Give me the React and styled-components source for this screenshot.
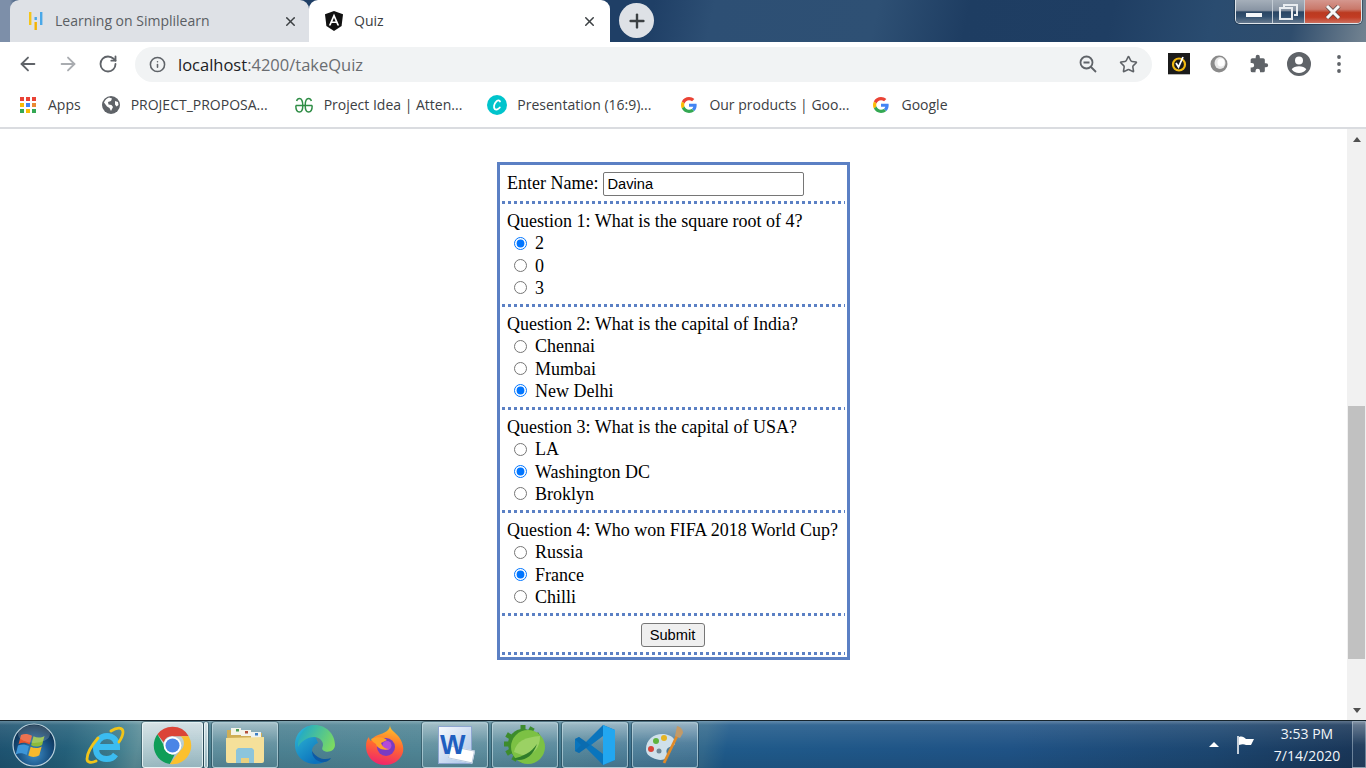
import React from 'react';
import styled, { createGlobalStyle } from 'styled-components';
import { ArrowLeft, ArrowRight, RotateCw, Info, Star, X, Plus } from 'lucide-react';

const Global = createGlobalStyle`
  html, body { margin: 0; padding: 0; height: 100%; overflow: hidden; background: #fff; }
  * { box-sizing: border-box; }
`;

const Screen = styled.div`
  width: 1366px;
  height: 768px;
  display: flex;
  flex-direction: column;
  overflow: hidden;
`;

/* ---- browser frame ---- */
const TitleBar = styled.div`
  height: 42px;
  flex: none;
  display: flex;
  align-items: flex-start;
  padding-left: 10px;
  background:
    linear-gradient(90deg, #7d8fa9 0, #7d8fa9 10px, rgba(125,143,169,0) 20px),
    linear-gradient(102deg, #1f3f66 0, #1f3f66 640px, #2d4f74 700px, #2e5074 860px, #1e3d62 950px, #1f3e63 1090px, #2a4c70 1190px, #2f4d6d 1270px, #6f808f 1340px, #7a8a98 1366px);
`;

const Tab = styled.div`
  width: ${p => (p.$active ? '301px' : '299px')};
  height: 42px;
  flex: none;
  display: flex;
  align-items: center;
  padding: 0 ${p => (p.$active ? '13px' : '11px')} 0 ${p => (p.$active ? '15px' : '16px')};
  border-radius: 9px 9px 0 0;
  background: ${p => (p.$active ? '#fff' : '#dee1e6')};
  font: 14px "Open Sans", sans-serif;
  color: ${p => (p.$active ? '#3c4043' : '#5a5e63')};
`;

const TabIcon = styled.svg`
  width: 20px;
  height: 20px;
  flex: none;
  margin-right: ${p => p.$gap}px;
`;

const TabLabel = styled.span`
  flex: 1;
  margin-top: -2px;
  white-space: nowrap;
`;

const NewTab = styled.div`
  width: 35px;
  height: 35px;
  margin: 3px 0 0 9px;
  flex: none;
  border-radius: 50%;
  background: #dee1e6;
  color: #3c4043;
  display: flex;
  align-items: center;
  justify-content: center;
`;

const WindowButtons = styled.div`
  margin: 0 4px 0 auto;
  width: 127px;
  height: 24px;
  display: flex;
  border: 1px solid #dfe5ea;
  border-top: 0;
  border-radius: 0 0 5px 5px;
  box-shadow: 0 0 0 1px rgba(20,40,60,.5);
  overflow: hidden;
`;

const WinBtn = styled.div`
  width: ${p => p.$w}px;
  flex: none;
  display: flex;
  align-items: center;
  justify-content: center;
  border-left: ${p => (p.$first ? '0' : '1px solid #c3ccd5')};
  background: ${p => (p.$close
    ? 'linear-gradient(#d5978e 0, #c9786a 40%, #bb3a20 55%, #c23c24 75%, #cc6f5e 100%)'
    : 'linear-gradient(#a5afba 0, #8894a3 45%, #2a4563 52%, #32506f 72%, #66798e 100%)')};
`;

const Toolbar = styled.div`
  height: 44px;
  flex: none;
  display: flex;
  align-items: center;
  background: #fff;
  padding: 0 14px 0 16px;
`;

const NavIcon = styled.div`
  width: 24px;
  height: 24px;
  margin-right: ${p => p.$gap || 0}px;
  flex: none;
  display: flex;
  align-items: center;
  justify-content: center;
  color: ${p => p.$color || '#5f6368'};
`;

const Omnibox = styled.div`
  width: 1017px;
  height: 35px;
  margin: 0 15px 0 15px;
  flex: none;
  display: flex;
  align-items: center;
  padding: 0 12px 0 14px;
  border-radius: 18px;
  background: #f1f3f4;
  color: #5f6368;
`;

const Url = styled.div`
  flex: 1;
  margin-left: 12px;
  font: 16.5px "Open Sans", sans-serif;
  color: #6a6d71;
  b { font-weight: 400; color: #202124; }
`;

const Bookmarks = styled.div`
  height: 43px;
  flex: none;
  display: flex;
  align-items: center;
  padding: 0 0 3px 18px;
  background: #fff;
  border-bottom: 2px solid #dadce0;
`;

const Bookmark = styled.div`
  display: flex;
  align-items: center;
  margin-right: ${p => p.$gap}px;
  font: 14px "Open Sans", sans-serif;
  color: #3c4043;
  white-space: nowrap;
`;

const BookmarkLabel = styled.span`
  margin-top: -2px;
`;

const BookmarkIcon = styled.svg`
  width: 20px;
  height: 20px;
  flex: none;
  margin-right: 10px;
`;

/* ---- page ---- */
const Viewport = styled.div`
  flex: 1;
  display: flex;
  min-height: 0;
`;

const Page = styled.main`
  flex: 1;
  display: flex;
  justify-content: center;
  align-items: flex-start;
  padding-top: 33px;
  background: #fff;
`;

const Scrollbar = styled.div`
  width: 19px;
  flex: none;
  display: flex;
  flex-direction: column;
  align-items: center;
  background: #f1f1f1;
`;

const ArrowBtn = styled.div`
  height: 20px;
  flex: none;
  display: flex;
  align-items: center;
  justify-content: center;
  &::after {
    content: '';
    border-left: 4.5px solid transparent;
    border-right: 4.5px solid transparent;
    ${p => (p.$down ? 'border-top: 5px solid #505050;' : 'border-bottom: 5px solid #505050;')}
  }
`;

const ScrollSpacer = styled.div`
  height: ${p => p.$h}px;
  flex: none;
`;

const Thumb = styled.div`
  width: 17px;
  height: 253px;
  flex: none;
  background: #c1c1c1;
`;

const QuizForm = styled.form`
  width: 353px;
  height: 498px;
  padding: 2px;
  border: 3px solid #5b80c4;
  font: 18px "Liberation Serif", "Times New Roman", serif;
  color: #000;
  display: flex;
  flex-direction: column;
`;

/* square dots, 3px on 3px off, the way the reference draws its dotted rule */
const Section = styled.div`
  height: ${p => p.$h}px;
  flex: none;
  padding: ${p => p.$top}px 5px 3px;
  line-height: 22.25px;
  background: repeating-linear-gradient(90deg, #5b80c4 0 3px, transparent 3px 6px) left bottom / 100% 3px no-repeat;
`;

const NameRow = styled(Section)`
  display: flex;
  align-items: flex-start;
  line-height: 23px;
`;

const NameInput = styled.input`
  width: 201px;
  height: 24px;
  margin: 0 0 0 5px;
  padding: 1px 3px;
  border: 1px solid #767676;
  border-radius: 2px;
  font: 14.67px "Liberation Sans", Arial, sans-serif;
  color: #000;
`;

const Question = styled.div`
  white-space: nowrap;
`;

const Option = styled.label`
  display: flex;
  align-items: center;
  height: 22.25px;
  padding-left: 6.5px;
`;

const Radio = styled.input`
  width: 13px;
  height: 13px;
  margin: 0 8.5px 0 0;
  flex: none;
`;

const SubmitRow = styled(Section)`
  display: flex;
  justify-content: center;
  align-items: flex-start;
  padding-right: 7px;
`;

const SubmitBtn = styled.button`
  width: 64px;
  height: 24px;
  padding: 0;
  border: 1px solid #767676;
  border-radius: 3px;
  background: #efefef;
  font: 14.67px "Liberation Sans", Arial, sans-serif;
  color: #000;
`;

/* ---- windows taskbar ---- */
const Taskbar = styled.div`
  height: 48px;
  flex: none;
  display: flex;
  align-items: stretch;
  border-top: 1px solid #16242c;
  background:
    linear-gradient(180deg, rgba(255,255,255,.3) 0, rgba(255,255,255,.1) 4px, rgba(0,0,0,0) 60%, rgba(0,0,0,.08) 100%),
    linear-gradient(100deg, #1d5270 0, #24607a 70px, #3f7d8e 120px, #5b8d98 140px, #4a7f90 180px, #4f8494 420px, #437a90 560px, #32688c 698px, #1f5a8a 720px, #1f5285 1000px, #1c4670 1200px, #193658 1340px, #1d3a58 1366px);
`;

const Orb = styled.div`
  width: 72px;
  flex: none;
  display: flex;
  align-items: center;
  padding-left: 12px;
`;

const Tile = styled.div`
  width: ${p => p.$w || 66}px;
  margin: 1px ${p => (p.$gap === undefined ? 4 : p.$gap)}px 0 0;
  flex: none;
  display: flex;
  align-items: center;
  justify-content: center;
  border-radius: 3px;
  ${p => p.$state === 'open' && `
    border: 1px solid rgba(205,228,235,.6);
    box-shadow: 0 0 0 1px rgba(15,35,45,.35);
    background: linear-gradient(rgba(255,255,255,.42), rgba(255,255,255,.14) 45%, rgba(255,255,255,.06));
  `}
  ${p => p.$state === 'active' && `
    border: 1px solid rgba(240,250,250,.8);
    box-shadow: 0 0 0 1px rgba(15,35,45,.35);
    background: linear-gradient(rgba(255,255,255,.72), rgba(215,232,235,.55));
  `}
`;

const Tray = styled.div`
  margin-left: auto;
  display: flex;
  align-items: center;
`;

const TrayArrow = styled.div`
  margin-right: 17px;
  border-left: 5px solid transparent;
  border-right: 5px solid transparent;
  border-bottom: 5px solid #fff;
`;

const Clock = styled.div`
  width: 90px;
  margin-left: 6px;
  text-align: center;
  font: 14px/22px "Open Sans", sans-serif;
  color: #f2f6fa;
`;

const ShowDesktop = styled.div`
  width: 14px;
  align-self: stretch;
  border: 1px solid rgba(220,235,245,.4);
  background: linear-gradient(rgba(255,255,255,.28), rgba(255,255,255,.04) 50%);
`;

const WordDoc = styled.div`
  position: relative;
  width: 34px;
  height: 38px;
  background: linear-gradient(135deg, #f6f9fd 0, #a9c4e8 100%);
  border: 1px solid #8ea6d0;
`;

const WordLetter = styled.span`
  position: absolute;
  left: 1px;
  top: 3px;
  font: bold 27px/30px "Liberation Sans", sans-serif;
  color: #1f5fc0;
`;

const WordSheet = styled.div`
  position: absolute;
  right: -3px;
  bottom: 2px;
  width: 25px;
  height: 13px;
  transform: rotate(12deg);
  background: #fff;
  border: 1px solid #b8c8dc;
`;

/* ---- logos ---- */
const GoogleG = () => (
  <BookmarkIcon viewBox="-6 -6 60 60">
    <path fill="#EA4335" d="M24 9.5c3.54 0 6.71 1.22 9.21 3.6l6.85-6.85C35.9 2.38 30.47 0 24 0 14.62 0 6.51 5.38 2.56 13.22l7.98 6.19C12.43 13.72 17.74 9.5 24 9.5z" />
    <path fill="#4285F4" d="M46.98 24.55c0-1.57-.15-3.09-.38-4.55H24v9.02h12.94c-.58 2.96-2.26 5.48-4.78 7.18l7.73 6c4.51-4.18 7.09-10.36 7.09-17.65z" />
    <path fill="#FBBC05" d="M10.53 28.59c-.48-1.45-.76-2.99-.76-4.59s.27-3.14.76-4.59l-7.98-6.19C.92 16.46 0 20.12 0 24c0 3.88.92 7.54 2.56 10.78l7.97-6.19z" />
    <path fill="#34A853" d="M24 48c6.48 0 11.93-2.13 15.89-5.81l-7.73-6c-2.15 1.45-4.92 2.3-8.16 2.3-6.26 0-11.57-4.22-13.47-9.91l-7.98 6.19C6.51 42.62 14.62 48 24 48z" />
  </BookmarkIcon>
);

const AppsGrid = () => {
  const colors = ['#ea4335', '#ea4335', '#ea4335', '#fbbc05', '#4285f4', '#ea8a35', '#34a853', '#fbbc05', '#34a853'];
  return (
    <BookmarkIcon viewBox="0 0 20 20">
      {colors.map((c, i) => (
        <rect key={i} x={2 + (i % 3) * 6} y={2 + Math.floor(i / 3) * 6} width="4" height="4" fill={c} />
      ))}
    </BookmarkIcon>
  );
};

const Globe = () => (
  <BookmarkIcon viewBox="0 0 20 20">
    <circle cx="10" cy="10" r="9" fill="#5f6368" />
    <path fill="#fff" d="M8 2.5l3 1-1 2.5-3 1 .5 2.5 3 .5 1.5 2-2 4-1.5-3-2.5-1.5L3 7.5C4 5 6 3 8 2.5zM14 6l3 1 .5 3-2 1.5-1.5-2z" />
  </BookmarkIcon>
);

const GfgIcon = () => (
  <BookmarkIcon viewBox="0 0 20 20" fill="none" stroke="#2f8d46" strokeWidth="1.5">
    <path d="M10 10.5H1.8M10 10.5h8.2M1.8 10.5c0 4 1.5 6.5 3.6 6.5 2.4 0 3.4-2.3 3.4-6.5C8.8 6 7.5 3.5 5.5 3.5 3.8 3.5 3 4.6 2.6 6M18.2 10.5c0 4-1.5 6.5-3.6 6.5-2.4 0-3.4-2.3-3.4-6.5 0-4.5 1.3-7 3.3-7 1.7 0 2.5 1.1 2.9 2.5" />
  </BookmarkIcon>
);

const CanvaIcon = () => (
  <BookmarkIcon viewBox="0 0 20 20">
    <circle cx="10" cy="10" r="10" fill="#00c4cc" />
    <path fill="none" stroke="#fff" strokeWidth="1.8" strokeLinecap="round" d="M13 6.5C12.5 4.8 10.5 5 9 6.8 7 9 6.3 12.5 7.8 14c1.3 1.2 3.5.2 5-1.5" />
  </BookmarkIcon>
);

const Simplilearn = () => (
  <TabIcon viewBox="0 0 20 20" $gap={9}>
    <rect x="3" y="1" width="2.4" height="13" fill="#f5c518" />
    <rect x="8.5" y="11" width="2.4" height="8" fill="#f5b301" />
    <rect x="8.5" y="6" width="2.4" height="3" fill="#4aa8e8" />
    <rect x="14" y="1" width="2.4" height="13" fill="#4aa8e8" />
  </TabIcon>
);

const AngularLogo = () => (
  <TabIcon viewBox="0 0 20 20" $gap={10}>
    <path fill="#111" d="M10 0L1 3.2l1.4 11.7L10 20l7.6-5.1L19 3.2z" />
    <path fill="#fff" d="M10 2.6L4.8 14.5h1.9l1-2.6h4.6l1 2.6h1.9zm0 4.2l1.6 3.6H8.4z" />
  </TabIcon>
);

const ZoomIcon = () => (
  <svg width="20" height="20" viewBox="0 0 20 20" fill="none" stroke="#5f6368" strokeWidth="1.8">
    <circle cx="8.5" cy="8.5" r="6" />
    <path d="M13 13l5 5M5.5 8.5h6" />
  </svg>
);

const Norton = () => (
  <svg width="22" height="22" viewBox="0 0 22 22">
    <rect width="22" height="21" fill="#1b1b1b" />
    <rect y="21" width="22" height="1" fill="#b8b8b8" />
    <circle cx="11" cy="11.5" r="6" fill="none" stroke="#f2b90f" strokeWidth="2.2" />
    <path fill="none" stroke="#fff" strokeWidth="1.8" d="M8 10l2.5 4L15 4" />
  </svg>
);

const GreyOrb = () => (
  <svg width="20" height="20" viewBox="0 0 20 20">
    <circle cx="10" cy="10" r="8.5" fill="#8a8a8a" />
    <ellipse cx="11" cy="9" rx="5.5" ry="6" fill="#e8e8e8" />
    <ellipse cx="12" cy="8.5" rx="3.5" ry="4" fill="#fff" />
  </svg>
);

const PuzzleIcon = () => (
  <svg width="20" height="20" viewBox="0 0 24 24" fill="#5f6368">
    <path d="M20.5 11H19V7a2 2 0 0 0-2-2h-4V3.5a2.5 2.5 0 0 0-5 0V5H4a2 2 0 0 0-2 2v3.8h1.5a2.7 2.7 0 0 1 0 5.4H2V20a2 2 0 0 0 2 2h3.8v-1.5a2.7 2.7 0 0 1 5.4 0V22H17a2 2 0 0 0 2-2v-4h1.5a2.5 2.5 0 0 0 0-5z" />
  </svg>
);

const ProfileIcon = () => (
  <svg width="24" height="24" viewBox="0 0 24 24" fill="#5f6368">
    <path d="M12 0a12 12 0 1 0 0 24 12 12 0 0 0 0-24zm0 4.5a4 4 0 1 1 0 8 4 4 0 0 1 0-8zm0 16.5a9 9 0 0 1-7.3-3.8c1.2-2 4.3-3 7.3-3s6.1 1 7.3 3A9 9 0 0 1 12 21z" />
  </svg>
);

const DotsIcon = () => (
  <svg width="4" height="18" viewBox="0 0 4 18" fill="#5f6368">
    <circle cx="2" cy="2" r="1.9" />
    <circle cx="2" cy="9" r="1.9" />
    <circle cx="2" cy="16" r="1.9" />
  </svg>
);

const WindowsOrb = () => (
  <svg width="44" height="44" viewBox="0 0 44 44">
    <defs>
      <radialGradient id="orb" cx="50%" cy="70%" r="65%">
        <stop offset="0" stopColor="#3f8fc8" />
        <stop offset="0.6" stopColor="#174f80" />
        <stop offset="1" stopColor="#0b2c49" />
      </radialGradient>
    </defs>
    <circle cx="22" cy="22" r="21" fill="url(#orb)" stroke="#bcd2dd" strokeWidth="1.2" />
    <path fill="#e8532b" d="M9 12c3.5-1.8 7-1.3 11 .7l-2.4 8.8c-3.6-1.9-7.1-2.3-11-.6z" />
    <path fill="#8dbb3b" d="M21.5 13.3c3.5 1.8 7.5 1.8 11-.3l-2.4 8.9c-3.5 2-7.5 2.2-11 .3z" />
    <path fill="#3d96d8" d="M6 22.5c3.8-1.7 7.3-1.3 11 .6L14.7 32c-3.6-1.9-7.3-2.3-11-.6z" />
    <path fill="#f6b92d" d="M18.7 23.7c3.5 1.8 7.4 1.8 11-.3L27.3 32.3c-3.5 2-7.5 2.2-11 .3z" />
    <ellipse cx="22" cy="11" rx="16" ry="9" fill="#fff" opacity=".18" />
  </svg>
);

const IeLogo = () => (
  <svg width="40" height="40" viewBox="0 0 40 40" fill="none">
    <path stroke="#3bbcf0" strokeWidth="6" d="M11 22h21c0-7-4-11-10-11-7 0-11 6-11 12.5S15 34 21.5 34c4 0 7-1.5 9-4.5" />
    <path stroke="#f0c419" strokeWidth="2.8" strokeLinecap="round" d="M26 6c6-4 12-4 12 1 0 4-2 7-4 10M13 13C7 20 2 28 2 34c0 4 5 4 9 2" />
  </svg>
);

const ChromeLogo = () => (
  <svg width="45" height="45" viewBox="0 0 48 48">
    <path fill="#db4437" d="M24 4a20 20 0 0 1 17.3 10H24a10 10 0 0 0-9.4 6.5L7.9 12A20 20 0 0 1 24 4z" />
    <path fill="#0f9d58" d="M4 24c0-4.500 1.5-8.7 3.900-12l8.600 15 .1.100A10 10 0 0 0 26 34l-4.800 9.800C11.500 42.400 4 34 4 24z" />
    <path fill="#fbc02d" d="M44 24c0 11-9 20-20 20l-2.800-.2L31.600 30A10 10 0 0 0 32.700 14h8.600A20 20 0 0 1 44 24z" />
    <circle cx="24" cy="24" r="9.5" fill="#fff" />
    <circle cx="24" cy="24" r="7.5" fill="#4a85e6" />
  </svg>
);

const FolderLogo = () => (
  <svg width="40" height="40" viewBox="0 0 40 40">
    <path fill="#cfae56" d="M2 5h13l2 3h20v7H2z" />
    <rect x="6" y="3" width="10" height="7" fill="#f4f4ea" />
    <rect x="16" y="5" width="10" height="6" fill="#f4f4ea" />
    <rect x="26" y="7" width="10" height="6" fill="#eef3f0" />
    <rect x="11" y="4" width="3" height="2.5" fill="#4f9d55" />
    <rect x="20" y="6" width="3" height="2.5" fill="#b4513a" />
    <rect x="30" y="8" width="3" height="2.5" fill="#3d7fc4" />
    <path fill="#f5e09a" d="M1 13l38-1v24a2 2 0 0 1-2 2H3a2 2 0 0 1-2-2z" />
    <path fill="#8cc5dc" d="M13 23h14l2 2v13h-5v-5h-8v5h-5V25z" />
    <rect x="16" y="33" width="8" height="5" fill="#e8cf80" />
  </svg>
);

const EdgeLogo = () => (
  <svg width="40" height="40" viewBox="0 0 40 40">
    <defs>
      <linearGradient id="edgeA" x1="0" y1="0" x2="0.6" y2="1">
        <stop offset="0" stopColor="#33bfd6" />
        <stop offset="1" stopColor="#0b72bd" />
      </linearGradient>
      <linearGradient id="edgeB" x1="0" y1="0.3" x2="1" y2="0.7">
        <stop offset="0" stopColor="#1fa9c9" />
        <stop offset="1" stopColor="#7ddb60" />
      </linearGradient>
    </defs>
    <path fill="url(#edgeA)" d="M20 0C8 0 0 9 0 20c0 11 9 19 20 19 3.5 0 7-1 9-2-7-1-12-5.5-12-11 0-4 3-7 6-8L19 8z" />
    <path fill="url(#edgeB)" d="M20 0c11 0 20 9 20 20 0 5-5 7.5-9.500 6.500-3-.7-4-2.500-3-4.500 2-4-2-10-8.500-10C12 12 6 16.500 3 22 2.500 10 10 0 20 0z" />
    <path fill="#0c5aa6" d="M17 26c0 7 6 12 13 11 2.5-.5 5-2 6-4-6 2.5-14 1-19-7z" />
  </svg>
);

const FirefoxLogo = () => (
  <svg width="38" height="40" viewBox="0 0 38 40">
    <defs>
      <linearGradient id="fox" x1="0.6" y1="0" x2="0.4" y2="1">
        <stop offset="0" stopColor="#ffc62a" />
        <stop offset="0.5" stopColor="#ff6a30" />
        <stop offset="1" stopColor="#f0246c" />
      </linearGradient>
    </defs>
    <path fill="url(#fox)" d="M24 0c0 5 5 7 9 12 5 7 6 15 1 21-4 5-9 7-15 7C8 40 0 32 0 21c0-4 1-7 3-9 0 2 1 3 2 4 1-3 4-5 7-6 6-2 12-4 12-10z" />
    <circle cx="20" cy="22" r="9" fill="#7a3bc2" />
    <circle cx="21" cy="20.5" r="4.5" fill="#b44bd8" />
    <path fill="#ffa02a" d="M5 14c6-3 13-2 16 1l-6 3c1 3 4 6 8 6-6 2-12-1-13-5-2-1-4-3-5-5z" />
  </svg>
);

const SpringLogo = () => (
  <svg width="42" height="40" viewBox="0 0 42 40">
    <g fill="#3d8c2c">
      <circle cx="19" cy="19" r="15" />
      {[0, 30, 60, 90, 120, 150, 180, 210, 240, 270, 300].map(a => (
        <rect key={a} x="16.5" y="0" width="5" height="6" transform={`rotate(${a} 19 19)`} />
      ))}
    </g>
    <circle cx="24" cy="22" r="17" fill="#7cc144" />
    <path fill="#9bd164" d="M10 27C12 16 22 12 36 11c0 12-6 20-18 19z" />
    <path fill="#2f7d2a" d="M9 34c10 3 19-1 24-15-6 9-14 12-24 15z" />
  </svg>
);

const VsCodeLogo = () => (
  <svg width="40" height="40" viewBox="0 0 40 40">
    <path fill="#0a75bd" d="M28 0L11 17 4 12l-4 2v12l4 2 7-5 17 17 12-5V5zM28 11v18L16 20z" />
    <path fill="#22a7f0" d="M28 0l12 5v30l-12 5z" />
    <path fill="#0a63a4" d="M4 12l-4 2 6 6-6 6 4 2 7-5 4-3-4-3z" opacity=".5" />
  </svg>
);

const PaintLogo = () => (
  <svg width="40" height="40" viewBox="0 0 40 40">
    <path fill="#cfe0ea" d="M1 24c0-10 9-16 18-15 7 1 11 4 11 9 0 4-6 3-8 6-2 3 2 6-1 9-3 3-9 2-13 0-4-2-7-4-7-9z" />
    <circle cx="6" cy="24" r="3" fill="#d8453a" />
    <circle cx="11" cy="16" r="3" fill="#5fb33f" />
    <circle cx="19" cy="13" r="3" fill="#e6b422" />
    <circle cx="14" cy="26" r="2.5" fill="#6d8797" />
    <path stroke="#e08a28" strokeWidth="2.8" d="M19 38L32 11" />
    <path fill="#c29a68" d="M30 11l2-10c4 1 6 4 6 7l-3 5z" />
  </svg>
);

const questions = [
  { label: 'Question 1: What is the square root of 4?', name: 'q1', options: ['2', '0', '3'], picked: 0 },
  { label: 'Question 2: What is the capital of India?', name: 'q2', options: ['Chennai', 'Mumbai', 'New Delhi'], picked: 2 },
  { label: 'Question 3: What is the capital of USA?', name: 'q3', options: ['LA', 'Washington DC', 'Broklyn'], picked: 1 },
  { label: 'Question 4: Who won FIFA 2018 World Cup?', name: 'q4', options: ['Russia', 'France', 'Chilli'], picked: 1 },
];

export default function App() {
  return (
    <Screen>
      <Global />
      <TitleBar>
        <Tab>
          <Simplilearn />
          <TabLabel>Learning on Simplilearn</TabLabel>
          <X size={15} strokeWidth={2.4} color="#3c4043" />
        </Tab>
        <Tab $active>
          <AngularLogo />
          <TabLabel>Quiz</TabLabel>
          <X size={15} strokeWidth={2.4} color="#3c4043" />
        </Tab>
        <NewTab><Plus size={22} strokeWidth={2.6} /></NewTab>
        <WindowButtons>
          <WinBtn $first $w={36}>
            <svg width="16" height="12" viewBox="0 0 16 12"><rect y="7" width="16" height="4" fill="#f4f6f8" /></svg>
          </WinBtn>
          <WinBtn $w={32}>
            <svg width="19" height="16" viewBox="0 0 19 16" fill="none" stroke="#e8ecf0" strokeWidth="2">
              <rect x="1" y="4" width="12" height="11" />
              <path d="M5 3V1h13v10h-3" />
            </svg>
          </WinBtn>
          <WinBtn $close $w={57}>
            <svg width="16" height="14" viewBox="0 0 16 14">
              <path stroke="#5a4a4a" strokeWidth="4.4" d="M2 1l12 12M14 1L2 13" />
              <path stroke="#f8f8f8" strokeWidth="3" d="M2 1l12 12M14 1L2 13" />
            </svg>
          </WinBtn>
        </WindowButtons>
      </TitleBar>

      <Toolbar>
        <NavIcon $gap={16}><ArrowLeft size={22} strokeWidth={2} /></NavIcon>
        <NavIcon $gap={16} $color="#a9acb0"><ArrowRight size={22} strokeWidth={2} /></NavIcon>
        <NavIcon><RotateCw size={20} strokeWidth={2.2} /></NavIcon>
        <Omnibox>
          <Info size={17} strokeWidth={2.2} />
          <Url><b>localhost</b>:4200/takeQuiz</Url>
          <NavIcon $gap={16}><ZoomIcon /></NavIcon>
          <NavIcon><Star size={19} strokeWidth={2} /></NavIcon>
        </Omnibox>
        <NavIcon $gap={16}><Norton /></NavIcon>
        <NavIcon $gap={16}><GreyOrb /></NavIcon>
        <NavIcon $gap={16}><PuzzleIcon /></NavIcon>
        <NavIcon $gap={16}><ProfileIcon /></NavIcon>
        <NavIcon><DotsIcon /></NavIcon>
      </Toolbar>

      <Bookmarks>
        <Bookmark $gap={20}><AppsGrid /><BookmarkLabel>Apps</BookmarkLabel></Bookmark>
        <Bookmark $gap={26}><Globe /><BookmarkLabel>PROJECT_PROPOSA...</BookmarkLabel></Bookmark>
        <Bookmark $gap={25}><GfgIcon /><BookmarkLabel>Project Idea | Atten...</BookmarkLabel></Bookmark>
        <Bookmark $gap={28}><CanvaIcon /><BookmarkLabel>Presentation (16:9)...</BookmarkLabel></Bookmark>
        <Bookmark $gap={22}><GoogleG /><BookmarkLabel>Our products | Goo...</BookmarkLabel></Bookmark>
        <Bookmark $gap={0}><GoogleG /><BookmarkLabel>Google</BookmarkLabel></Bookmark>
      </Bookmarks>

      <Viewport>
        <Page>
          <QuizForm onSubmit={e => e.preventDefault()}>
            <NameRow $h={37} $top={5}>
              Enter Name:
              <NameInput defaultValue="Davina" />
            </NameRow>
            {questions.map(q => (
              <Section key={q.name} $h={103} $top={6}>
                <Question>{q.label}</Question>
                {q.options.map((o, i) => (
                  <Option key={o}>
                    <Radio type="radio" name={q.name} defaultChecked={i === q.picked} />
                    {o}
                  </Option>
                ))}
              </Section>
            ))}
            <SubmitRow $h={39} $top={7}>
              <SubmitBtn type="submit">Submit</SubmitBtn>
            </SubmitRow>
          </QuizForm>
        </Page>
        <Scrollbar>
          <ArrowBtn />
          <ScrollSpacer $h={257} />
          <Thumb />
          <ScrollSpacer $h={41} />
          <ArrowBtn $down />
        </Scrollbar>
      </Viewport>

      <Taskbar>
        <Orb><WindowsOrb /></Orb>
        <Tile><IeLogo /></Tile>
        <Tile $w={61} $gap={1} $state="active"><ChromeLogo /></Tile>
        <Tile $w={4} $gap={4} $state="active" />
        <Tile $state="open"><FolderLogo /></Tile>
        <Tile><EdgeLogo /></Tile>
        <Tile><FirefoxLogo /></Tile>
        <Tile $state="open">
          <WordDoc>
            <WordSheet />
            <WordLetter>W</WordLetter>
          </WordDoc>
        </Tile>
        <Tile $state="open"><SpringLogo /></Tile>
        <Tile $state="open"><VsCodeLogo /></Tile>
        <Tile $state="open"><PaintLogo /></Tile>
        <Tray>
          <TrayArrow />
          <svg width="20" height="20" viewBox="0 0 20 20">
            <path stroke="#fff" strokeWidth="1.5" d="M2 1v18" />
            <path fill="#fff" d="M3 2c3-1 5 0 7 2l8 0-3 6-5 0c-2-1-4-1-7 0z" />
          </svg>
          <Clock>3:53 PM<br />7/14/2020</Clock>
          <ShowDesktop />
        </Tray>
      </Taskbar>
    </Screen>
  );
}
